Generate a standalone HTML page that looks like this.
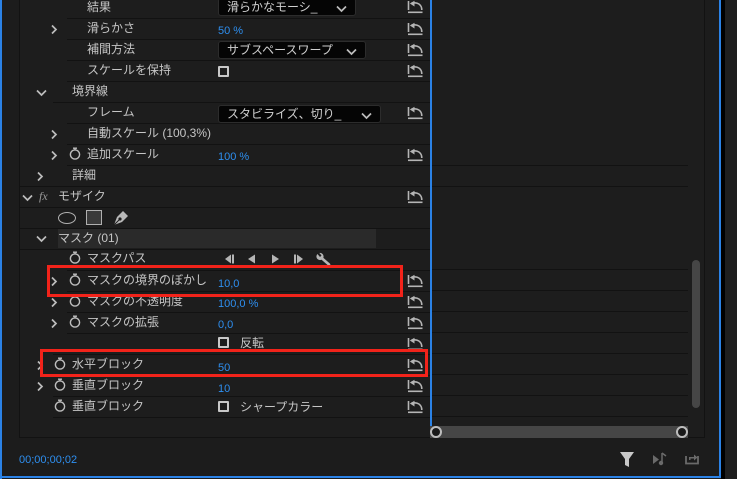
<!DOCTYPE html>
<html><head><meta charset="utf-8">
<style>
*{margin:0;padding:0;box-sizing:border-box}
body{width:737px;height:479px;background:#1d1d1d;position:relative;overflow:hidden;font-family:"Liberation Sans","Noto Sans CJK JP",sans-serif;font-size:12px;color:#c6c6c6}
.a{position:absolute}
.t{position:absolute;line-height:14px;white-space:nowrap}
.v{color:#2e8ff0;font-size:11px}
.ln{position:absolute;height:1px;background:#121212}
.dd{position:absolute;height:18px;background:#050505;border:1px solid #2c2c2c;border-radius:3px;color:#d0d0d0;padding-left:8px;line-height:16px;font-size:12px}
.dd svg{position:absolute;right:8px;top:5px}
.cb{position:absolute;width:11px;height:11px;border:2px solid #c8c8c8;border-radius:1px}
.rb{position:absolute;border:3px solid #f2231a}
</style></head><body>
<svg width="0" height="0" style="position:absolute">
<defs>
<g id="rs"><path d="M1.5 1V10M4.5 3.2C10.5 1.8 14.8 4.5 14.8 10" fill="none" stroke="#b5b5b5" stroke-width="1.6"/><path d="M2.8 3.5L7.5 0.8V6.5Z" fill="#b5b5b5"/><path d="M1 12.3H15.5" stroke="#b5b5b5" stroke-width="1.6"/></g>
<g id="sw"><circle cx="6" cy="7.5" r="4.6" fill="none" stroke="#bdbdbd" stroke-width="1.4"/><path d="M4 1.2H8M6 1.2V3" stroke="#bdbdbd" stroke-width="1.4"/></g>
<g id="cr"><path d="M2 1.5L6 5.5L2 9.5" fill="none" stroke="#bdbdbd" stroke-width="1.7"/></g>
<g id="cd"><path d="M1 2.5L5.5 7L10 2.5" fill="none" stroke="#bdbdbd" stroke-width="1.7"/></g>
</defs></svg>

<div class="a" style="left:0;top:0;width:2px;height:479px;background:#2b82e6"></div>
<div class="a" style="left:0;top:476px;width:722px;height:2px;background:#2b82e6"></div>
<div class="a" style="left:719px;top:0;width:2px;height:478px;background:#2b82e6"></div>
<div class="a" style="left:721px;top:0;width:4px;height:479px;background:#000"></div>
<div class="a" style="left:725px;top:0;width:12px;height:479px;background:#1e1e1e"></div>
<div class="a" style="left:2px;top:0;width:717px;height:476px;background:#1c1c1c"></div>
<div class="a" style="left:19px;top:0;width:686px;height:438px;background:#1d1d1d;border-left:1px solid #121212;border-right:1px solid #121212;border-bottom:1px solid #121212"></div>

<div class="ln" style="left:67px;top:18px;width:363px"></div>
<div class="ln" style="left:67px;top:39px;width:363px"></div>
<div class="ln" style="left:67px;top:60px;width:363px"></div>
<div class="ln" style="left:67px;top:81px;width:363px"></div>
<div class="ln" style="left:53px;top:102px;width:377px"></div>
<div class="ln" style="left:67px;top:123px;width:363px"></div>
<div class="ln" style="left:67px;top:144px;width:363px"></div>
<div class="ln" style="left:67px;top:165px;width:430px"></div>
<div class="ln" style="left:20px;top:186px;width:410px"></div>
<div class="ln" style="left:20px;top:207px;width:410px"></div>
<div class="ln" style="left:20px;top:228px;width:410px"></div>
<div class="ln" style="left:20px;top:249px;width:410px"></div>
<div class="ln" style="left:67px;top:270px;width:363px"></div>
<div class="ln" style="left:67px;top:291px;width:363px"></div>
<div class="ln" style="left:67px;top:312px;width:363px"></div>
<div class="ln" style="left:67px;top:333px;width:363px"></div>
<div class="ln" style="left:53px;top:354px;width:377px"></div>
<div class="ln" style="left:53px;top:375px;width:377px"></div>
<div class="ln" style="left:53px;top:396px;width:377px"></div>
<div class="ln" style="left:53px;top:417px;width:377px"></div>
<div class="ln" style="left:430px;top:165px;width:258px"></div>
<div class="ln" style="left:430px;top:186px;width:258px"></div>
<div class="ln" style="left:430px;top:269px;width:258px"></div>
<div class="ln" style="left:430px;top:290px;width:258px"></div>
<div class="ln" style="left:430px;top:311px;width:258px"></div>
<div class="ln" style="left:430px;top:332px;width:258px"></div>
<div class="ln" style="left:430px;top:353px;width:258px"></div>
<div class="ln" style="left:430px;top:374px;width:258px"></div>
<div class="ln" style="left:430px;top:395px;width:258px"></div>
<div class="ln" style="left:430px;top:416px;width:258px"></div>

<div class="a" style="left:58px;top:229px;width:318px;height:19px;background:#2a2a2a"></div>
<div class="a" style="left:430px;top:0;width:1.5px;height:426px;background:#2b82e6"></div>

<div class="a" style="left:692px;top:260px;width:8px;height:148px;background:#464646;border-radius:4px"></div>
<div class="a" style="left:430px;top:426px;width:258px;height:12px;background:#464646"></div>
<div class="a" style="left:430px;top:426px;width:12px;height:12px;border-radius:6px;background:#1a1a1a;border:2px solid #bdbdbd"></div>
<div class="a" style="left:676px;top:426px;width:12px;height:12px;border-radius:6px;background:#1a1a1a;border:2px solid #bdbdbd"></div>

<div class="t" style="left:87px;top:0">結果</div>
<div class="dd" style="left:218px;top:-2px;width:138px">滑らかなモーシ_<svg width="11" height="9"><use href="#cd"/></svg></div>

<svg class="a" style="left:50px;top:24px" width="8" height="11"><use href="#cr"/></svg>
<div class="t" style="left:87px;top:21px">滑らかさ</div>
<div class="t v" style="left:218px;top:24px">50 %</div>

<div class="t" style="left:87px;top:42px">補間方法</div>
<div class="dd" style="left:218px;top:41px;width:148px">サブスペースワープ<svg width="11" height="9"><use href="#cd"/></svg></div>

<div class="t" style="left:87px;top:63px">スケールを保持</div>
<div class="cb" style="left:218px;top:66px"></div>

<svg class="a" style="left:36px;top:88px" width="12" height="9"><use href="#cd"/></svg>
<div class="t" style="left:72px;top:84px">境界線</div>

<div class="t" style="left:87px;top:105px">フレーム</div>
<div class="dd" style="left:218px;top:105px;width:163px">スタビライズ、切り_<svg width="11" height="9"><use href="#cd"/></svg></div>

<svg class="a" style="left:50px;top:129px" width="8" height="11"><use href="#cr"/></svg>
<div class="t" style="left:87px;top:126px">自動スケール (100,3%)</div>

<svg class="a" style="left:50px;top:150px" width="8" height="11"><use href="#cr"/></svg>
<svg class="a" style="left:69px;top:147px" width="13" height="14"><use href="#sw"/></svg>
<div class="t" style="left:87px;top:147px">追加スケール</div>
<div class="t v" style="left:218px;top:150px">100 %</div>

<svg class="a" style="left:36px;top:171px" width="8" height="11"><use href="#cr"/></svg>
<div class="t" style="left:72px;top:168px">詳細</div>

<svg class="a" style="left:22px;top:193px" width="12" height="9"><use href="#cd"/></svg>
<div class="t" style="left:39px;top:189px;font-style:italic;font-family:'Liberation Serif',serif;color:#9a9a9a">fx</div>
<div class="t" style="left:58px;top:189px">モザイク</div>

<div class="a" style="left:58px;top:212px;width:18px;height:12px;border:1.5px solid #b0b0b0;border-radius:50%"></div>
<div class="a" style="left:86px;top:210px;width:16px;height:15px;border:1.5px solid #b0b0b0;background:#3a3a3a"></div>
<svg class="a" style="left:112px;top:209px" width="17" height="17"><path d="M2 16L5 8L11 2L16 7L10 13Z" fill="#b8b8b8"/><circle cx="8" cy="10" r="1.6" fill="#1d1d1d"/><path d="M2 16L7 11" stroke="#1d1d1d" stroke-width="1"/></svg>

<svg class="a" style="left:36px;top:234px" width="12" height="9"><use href="#cd"/></svg>
<div class="t" style="left:58px;top:231px">マスク (01)</div>

<svg class="a" style="left:69px;top:251px" width="13" height="14"><use href="#sw"/></svg>
<div class="t" style="left:87px;top:251px">マスクパス</div>
<svg class="a" style="left:222px;top:252px" width="112" height="14" fill="#b5b5b5">
<path d="M3 7L9 2.5V11.5Z"/><rect x="10" y="2.5" width="2" height="9"/>
<path d="M26 7L33 2.5V11.5Z"/>
<path d="M50 2.5L57 7L50 11.5Z"/>
<rect x="72" y="2.5" width="2" height="9"/><path d="M75 2.5L81 7L75 11.5Z"/>
<path d="M99 5.5L107 12.5" stroke="#b5b5b5" stroke-width="2.6" stroke-linecap="round"/>
<circle cx="98" cy="4.5" r="3.6"/><path d="M96.5 0L99.5 3.5L98 5L95 1.5Z" fill="#1d1d1d"/>
</svg>

<svg class="a" style="left:50px;top:276px" width="8" height="11"><use href="#cr"/></svg>
<svg class="a" style="left:69px;top:273px" width="13" height="14"><use href="#sw"/></svg>
<div class="t" style="left:87px;top:273px">マスクの境界のぼかし</div>
<div class="t v" style="left:218px;top:277px">10,0</div>

<svg class="a" style="left:50px;top:297px" width="8" height="11"><use href="#cr"/></svg>
<svg class="a" style="left:69px;top:294px" width="13" height="14"><use href="#sw"/></svg>
<div class="t" style="left:87px;top:294px">マスクの不透明度</div>
<div class="t v" style="left:218px;top:297px">100,0 %</div>

<svg class="a" style="left:50px;top:318px" width="8" height="11"><use href="#cr"/></svg>
<svg class="a" style="left:69px;top:315px" width="13" height="14"><use href="#sw"/></svg>
<div class="t" style="left:87px;top:315px">マスクの拡張</div>
<div class="t v" style="left:218px;top:318px">0,0</div>

<div class="cb" style="left:218px;top:337px"></div>
<div class="t" style="left:240px;top:336px">反転</div>

<svg class="a" style="left:36px;top:360px" width="8" height="11"><use href="#cr"/></svg>
<svg class="a" style="left:54px;top:357px" width="13" height="14"><use href="#sw"/></svg>
<div class="t" style="left:72px;top:357px">水平ブロック</div>
<div class="t v" style="left:218px;top:361px">50</div>

<svg class="a" style="left:36px;top:381px" width="8" height="11"><use href="#cr"/></svg>
<svg class="a" style="left:54px;top:378px" width="13" height="14"><use href="#sw"/></svg>
<div class="t" style="left:72px;top:378px">垂直ブロック</div>
<div class="t v" style="left:218px;top:382px">10</div>

<svg class="a" style="left:54px;top:399px" width="13" height="14"><use href="#sw"/></svg>
<div class="t" style="left:72px;top:399px">垂直ブロック</div>
<div class="cb" style="left:218px;top:401px"></div>
<div class="t" style="left:240px;top:400px">シャープカラー</div>

<svg class="a" style="left:407px;top:0" width="16" height="14"><use href="#rs"/></svg>
<svg class="a" style="left:407px;top:22px" width="16" height="14"><use href="#rs"/></svg>
<svg class="a" style="left:407px;top:43px" width="16" height="14"><use href="#rs"/></svg>
<svg class="a" style="left:407px;top:64px" width="16" height="14"><use href="#rs"/></svg>
<svg class="a" style="left:407px;top:106px" width="16" height="14"><use href="#rs"/></svg>
<svg class="a" style="left:407px;top:148px" width="16" height="14"><use href="#rs"/></svg>
<svg class="a" style="left:407px;top:190px" width="16" height="14"><use href="#rs"/></svg>
<svg class="a" style="left:407px;top:274px" width="16" height="14"><use href="#rs"/></svg>
<svg class="a" style="left:407px;top:295px" width="16" height="14"><use href="#rs"/></svg>
<svg class="a" style="left:407px;top:316px" width="16" height="14"><use href="#rs"/></svg>
<svg class="a" style="left:407px;top:337px" width="16" height="14"><use href="#rs"/></svg>
<svg class="a" style="left:407px;top:358px" width="16" height="14"><use href="#rs"/></svg>
<svg class="a" style="left:407px;top:379px" width="16" height="14"><use href="#rs"/></svg>
<svg class="a" style="left:407px;top:400px" width="16" height="14"><use href="#rs"/></svg>

<div class="rb" style="left:47px;top:265px;width:356px;height:32px"></div>
<div class="rb" style="left:40px;top:349px;width:388px;height:28px"></div>

<div class="t v" style="left:19px;top:453px;font-size:11px">00;00;00;02</div>
<svg class="a" style="left:619px;top:451px" width="16" height="17"><path d="M1 1H15L10 8V16L6 14V8Z" fill="#c8c8c8"/></svg>
<svg class="a" style="left:652px;top:452px" width="16" height="14" fill="#6a6a6a"><path d="M1 3L7 7.5L1 12Z"/><path d="M10 1V11" stroke="#6a6a6a" stroke-width="1.5"/><circle cx="9" cy="11" r="2.2"/><path d="M10 1L14 4" stroke="#6a6a6a" stroke-width="1.5"/></svg>
<svg class="a" style="left:685px;top:451px" width="14" height="14"><path d="M1 5V12.5H13V5" fill="none" stroke="#6a6a6a" stroke-width="1.8"/><path d="M4 9V6H9V3.5L12.5 6.5L9 9.5V7.5H5.5V9Z" fill="#6a6a6a"/></svg>
</body></html>
